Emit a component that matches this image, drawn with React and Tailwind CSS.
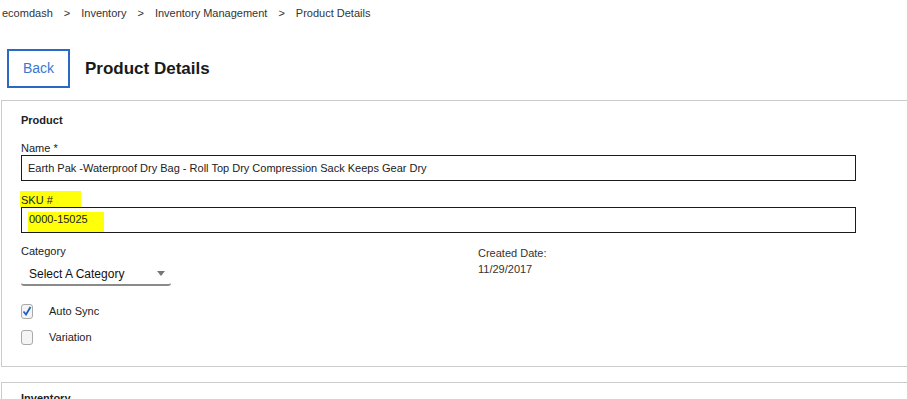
import React from 'react';

const CRUMBS = ['ecomdash', 'Inventory', 'Inventory Management', 'Product Details'];

export default function App() {
    return (
        <div className="w-[907px] h-[399px] overflow-hidden bg-white text-[#222] font-['Liberation_Sans',Arial,sans-serif]">
            {/* BREADCRUMB */}
            <div className="flex items-center h-[26px] pl-[2px] text-[11px] text-[#333]">
                {CRUMBS.map((c, i) => (
                    <React.Fragment key={c}>
                        {i > 0 && <span className="px-[11px]">&gt;</span>}
                        <span>{c}</span>
                    </React.Fragment>
                ))}
            </div>

            {/* HEADER */}
            <div className="flex items-center mt-[23px] pl-[7px]">
                <button className="w-[63px] h-[39px] border-2 border-[#2a6ac6] text-[#3a78cf] text-[14px]">
                    Back
                </button>
                <h1 className="ml-[15px] text-[17px] font-bold text-[#1a1a1a]">Product Details</h1>
            </div>

            {/* PRODUCT PANEL */}
            <div className="mt-[12px] ml-[1px] border border-r-0 border-[#cbcbcb] h-[267px] pl-[19px] pt-[12px]">
                <p className="text-[11px] font-bold leading-[14px]">Product</p>

                <p className="mt-[15px] text-[11px] leading-[13px]">Name *</p>
                <div className="w-[835px] h-[26px] border border-[#1b1b1b] flex items-center pl-[6px] text-[11px]">
                    Earth Pak -Waterproof Dry Bag - Roll Top Dry Compression Sack Keeps Gear Dry
                </div>

                <p className="mt-[10px] -ml-[1px] w-[61px] h-[16px] bg-[#ffff0a] text-[11px] leading-[18px] pl-[1px]">SKU #</p>
                <div className="w-[835px] h-[26px] border border-[#1b1b1b] flex items-center pl-[6px] text-[11px]">
                    <span className="bg-[#ffff0a] w-[76px] h-[20px] mt-[4px] leading-[14px] pl-[1px]">0000-15025</span>
                </div>

                <div className="flex mt-[12px]">
                    <div className="w-[457px]">
                        <p className="text-[11px] leading-[13px]">Category</p>
                        <div className="mt-[5px] w-[150px] h-[23px] border-b-2 border-[#8a8a8a] rounded-b-[3px] flex items-center justify-between pl-[8px] pr-[6px] text-[12px] text-[#111]">
                            <span>Select A Category</span>
                            <span className="w-0 h-0 border-l-[4px] border-r-[4px] border-t-[5px] border-l-transparent border-r-transparent border-t-[#777]" />
                        </div>
                    </div>
                    <div className="text-[11px] leading-[16px] text-[#333]">
                        <p>Created Date:</p>
                        <p>11/29/2017</p>
                    </div>
                </div>

                <div className="mt-[17px] flex items-center h-[16px]">
                    <span className="w-[12px] h-[15px] border border-[#aaa] rounded-[3px] bg-[#f4f4f4] flex items-center justify-center">
                        <svg width="10" height="10" viewBox="0 0 10 10">
                            <path d="M1.5 5.5 L4 8.5 L8.5 1" fill="none" stroke="#1f5fc4" strokeWidth="1.8" />
                        </svg>
                    </span>
                    <span className="ml-[16px] text-[11px]">Auto Sync</span>
                </div>
                <div className="mt-[10px] flex items-center h-[16px]">
                    <span className="w-[12px] h-[15px] border border-[#aaa] rounded-[3px] bg-[#f4f4f4]" />
                    <span className="ml-[16px] text-[11px]">Variation</span>
                </div>
            </div>

            {/* INVENTORY PANEL */}
            <div className="mt-[15px] ml-[1px] border border-r-0 border-[#cbcbcb] h-[40px] pl-[19px] pt-[8px]">
                <p className="text-[11px] font-bold leading-[14px]">Inventory</p>
            </div>
        </div>
    );
}
